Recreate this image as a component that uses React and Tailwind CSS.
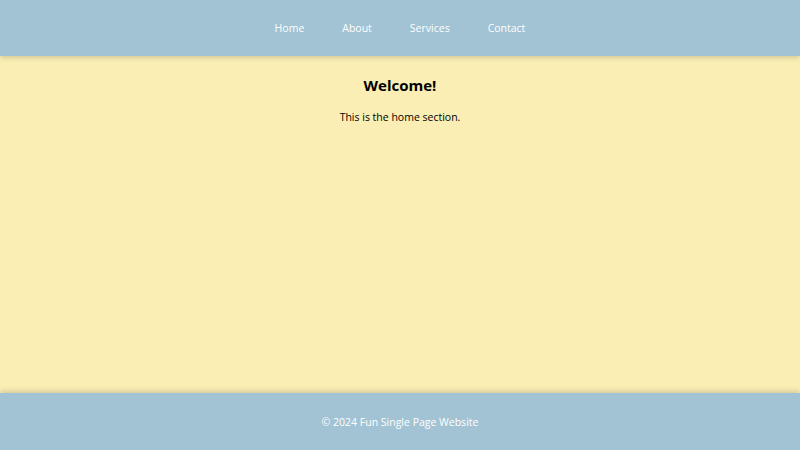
export default function App() {
  const links = ['Home', 'About', 'Services', 'Contact'];
  return (
    <div
      className="flex h-[450px] w-full flex-col bg-[#faeeb4] text-black"
      style={{ fontFamily: '"Comic Sans MS", "Open Sans", sans-serif' }}
    >
      <header className="relative z-10 flex h-14 items-center justify-center bg-[#a1c3d4] shadow-[0_2px_5px_rgba(0,0,0,0.15)]">
        <nav className="flex items-center gap-[38px] pt-px text-[10.5px] text-white">
          {links.map(l => (
            <a key={l} href="#" className="no-underline">{l}</a>
          ))}
        </nav>
      </header>

      <main className="flex-1 pt-[17px] text-center">
        <h1 className="text-[15px] font-bold leading-6">Welcome!</h1>
        <p className="mt-[13px] text-[10.5px]">This is the home section.</p>
      </main>

      <footer className="relative z-10 flex h-[57px] items-center justify-center bg-[#a1c3d4] pt-0.5 text-[10.5px] text-white shadow-[0_-2px_5px_rgba(0,0,0,0.15)]">
        © 2024 Fun Single Page Website
      </footer>
    </div>
  );
}
